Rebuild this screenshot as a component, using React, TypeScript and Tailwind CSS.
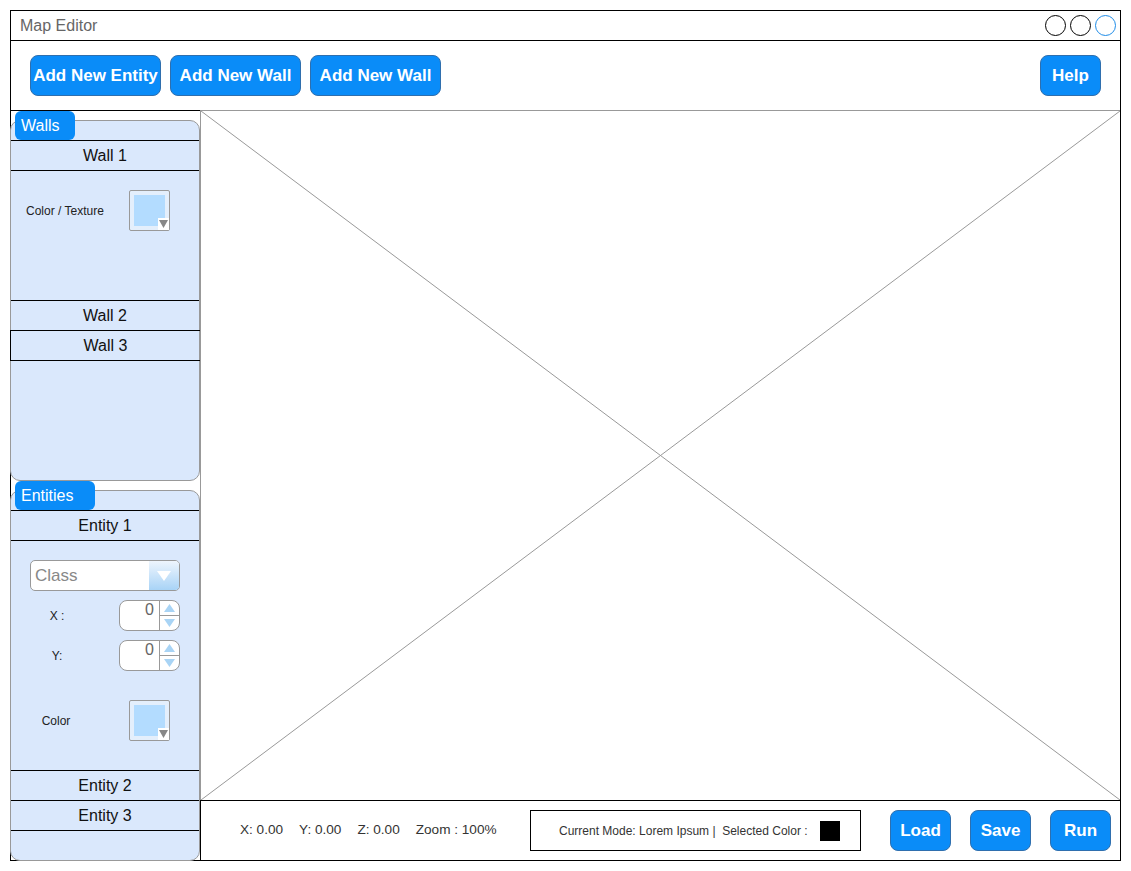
import React from "react";

// Map Editor wireframe

const font = { fontFamily: '"Liberation Sans", Arial, sans-serif' };

function BlueButton({ label, className = "" }: { label: string; className?: string }) {
  return (
    <button
      className={`h-[41px] rounded-[8px] border border-[#2f6fae] bg-[#0a8cf8] text-[17px] font-bold text-white flex items-center justify-center whitespace-nowrap ${className}`}
    >
      {label}
    </button>
  );
}

function Tab({ label, width }: { label: string; width: string }) {
  return (
    <div
      className={`absolute left-[4px] top-[-10px] h-[29px] ${width} rounded-[6px] bg-[#0a8cf8] pl-[6px] text-[16px] leading-[29px] text-white`}
    >
      {label}
    </div>
  );
}

function Row({ label, className = "" }: { label: string; className?: string }) {
  return (
    <div className={`flex items-center justify-center text-[16px] text-[#111] ${className}`}>{label}</div>
  );
}

function Swatch() {
  return (
    <div className="relative h-[41px] w-[41px] rounded-[2px] border border-[#999] bg-[#e4effc]">
      <div className="absolute left-[4px] top-[4px] h-[31px] w-[31px] bg-[#b3dcff]" />
      <div className="absolute bottom-0 right-0 flex h-[12px] w-[11px] items-center justify-center bg-white">
        <svg width="9" height="8" viewBox="0 0 9 8">
          <path d="M0 0 H9 L4.5 8 Z" fill="#888" />
        </svg>
      </div>
    </div>
  );
}

function Spinner() {
  return (
    <div className="flex h-[31px] w-[61px] overflow-hidden rounded-[8px] border border-[#999] bg-white">
      <div className="flex-1 pr-[5px] text-right text-[16px] leading-[18px] text-[#666]">0</div>
      <div className="flex w-[20px] flex-col border-l border-[#999]">
        <div className="flex flex-1 items-center justify-center border-b border-[#999]">
          <svg width="11" height="8" viewBox="0 0 11 8">
            <path d="M0 8 H11 L5.5 0 Z" fill="#a9d4f5" />
          </svg>
        </div>
        <div className="flex flex-1 items-center justify-center">
          <svg width="11" height="8" viewBox="0 0 11 8">
            <path d="M0 0 H11 L5.5 8 Z" fill="#a9d4f5" />
          </svg>
        </div>
      </div>
    </div>
  );
}

function WallsPanel() {
  return (
    <div className="relative mt-[9px] flex h-[361px] flex-col rounded-[10px] border border-[#999] bg-[#dae8fc] pt-[19px]">
      <Tab label="Walls" width="w-[60px]" />
      <Row label="Wall 1" className="h-[31px] border-y border-black" />
      <div className="flex h-[129px] items-start pt-[19px] pl-[15px] pr-[29px]">
        <div className="flex w-full items-center justify-between">
          <span className="text-[12px] text-[#222]">Color / Texture</span>
          <Swatch />
        </div>
      </div>
      <Row label="Wall 2" className="h-[30px] border-t border-black" />
      <Row label="Wall 3" className="-ml-px -mr-[2px] h-[31px] border border-black" />
      <div className="flex-1" />
    </div>
  );
}

function EntitiesPanel() {
  return (
    <div className="relative -mb-px mt-[9px] flex flex-1 flex-col rounded-[10px] border border-[#999] bg-[#dae8fc] pt-[19px]">
      <Tab label="Entities" width="w-[80px]" />
      <Row label="Entity 1" className="h-[31px] border-y border-black" />
      <div className="flex h-[229px] flex-col pt-[19px]">
        <div className="mx-[19px] flex h-[31px] overflow-hidden rounded-[5px] border border-[#999] bg-white">
          <div className="flex-1 pl-[4px] text-[17px] leading-[29px] text-[#888]">Class</div>
          <div className="flex w-[30px] items-center justify-center bg-gradient-to-b from-[#eef5fd] to-[#a8d3f6]">
            <svg width="14" height="10" viewBox="0 0 14 10">
              <path d="M0 0 H14 L7 10 Z" fill="#fff" />
            </svg>
          </div>
        </div>
        <div className="mt-[9px] flex items-center pr-[19px]">
          <span className="w-[92px] text-center text-[12px] text-[#222]">X :</span>
          <div className="ml-auto">
            <Spinner />
          </div>
        </div>
        <div className="mt-[9px] flex items-center pr-[19px]">
          <span className="w-[92px] text-center text-[12px] text-[#222]">Y:</span>
          <div className="ml-auto">
            <Spinner />
          </div>
        </div>
        <div className="mt-[29px] flex items-center pr-[29px]">
          <span className="w-[90px] text-center text-[12px] text-[#222]">Color</span>
          <div className="ml-auto">
            <Swatch />
          </div>
        </div>
      </div>
      <Row label="Entity 2" className="h-[30px] border-t border-black" />
      <Row label="Entity 3" className="h-[31px] border-y border-black" />
      <div className="flex-1" />
    </div>
  );
}

export default function App() {
  return (
    <div className="h-[871px] w-[1131px] bg-white p-[10px]" style={font}>
      <div className="flex h-[851px] w-[1111px] flex-col border border-black">
        {/* Title bar */}
        <div className="flex h-[30px] items-center justify-between border-b border-black pl-[9px] pr-[4px]">
          <span className="text-[16px] text-[#666]">Map Editor</span>
          <div className="flex gap-[4px]">
            <div className="h-[21px] w-[21px] rounded-full border border-black" />
            <div className="h-[21px] w-[21px] rounded-full border border-black" />
            <div className="h-[21px] w-[21px] rounded-full border border-[#1e8ce8]" />
          </div>
        </div>

        {/* Toolbar */}
        <div className="flex h-[69px] items-center gap-[9px] pl-[19px] pr-[19px]">
          <BlueButton label="Add New Entity" className="w-[131px]" />
          <BlueButton label="Add New Wall" className="w-[131px]" />
          <BlueButton label="Add New Wall" className="w-[131px]" />
          <BlueButton label="Help" className="ml-auto w-[61px]" />
        </div>

        {/* Main */}
        <div className="flex flex-1">
          <div className="-ml-px flex w-[190px] flex-col border-t border-black">
            <WallsPanel />
            <EntitiesPanel />
          </div>

          <div className="flex flex-1 flex-col">
            <div className="relative flex-1 border-l border-t border-[#999]">
              <svg
                className="absolute inset-0 h-full w-full"
                viewBox="0 0 100 100"
                preserveAspectRatio="none"
              >
                <line x1="0" y1="0" x2="100" y2="100" stroke="#999" strokeWidth="1" vectorEffect="non-scaling-stroke" />
                <line x1="0" y1="100" x2="100" y2="0" stroke="#999" strokeWidth="1" vectorEffect="non-scaling-stroke" />
              </svg>
            </div>

            {/* Status bar */}
            <div className="flex h-[60px] items-center border-l border-t border-black pl-[39px]">
              <div className="flex w-[290px] gap-[16px] text-[13.6px] text-[#333]">
                <span>X: 0.00</span>
                <span>Y: 0.00</span>
                <span>Z: 0.00</span>
                <span>Zoom : 100%</span>
              </div>
              <div className="flex h-[41px] w-[331px] items-center border border-black pl-[28px] text-[12px] text-[#333]">
                <span className="whitespace-pre">Current Mode: Lorem Ipsum |  Selected Color :</span>
                <div className="ml-[12px] h-[20px] w-[20px] bg-black" />
              </div>
              <div className="ml-[29px] flex gap-[19px]">
                <BlueButton label="Load" className="w-[61px]" />
                <BlueButton label="Save" className="w-[61px]" />
                <BlueButton label="Run" className="w-[61px]" />
              </div>
            </div>
          </div>
        </div>
      </div>
    </div>
  );
}
